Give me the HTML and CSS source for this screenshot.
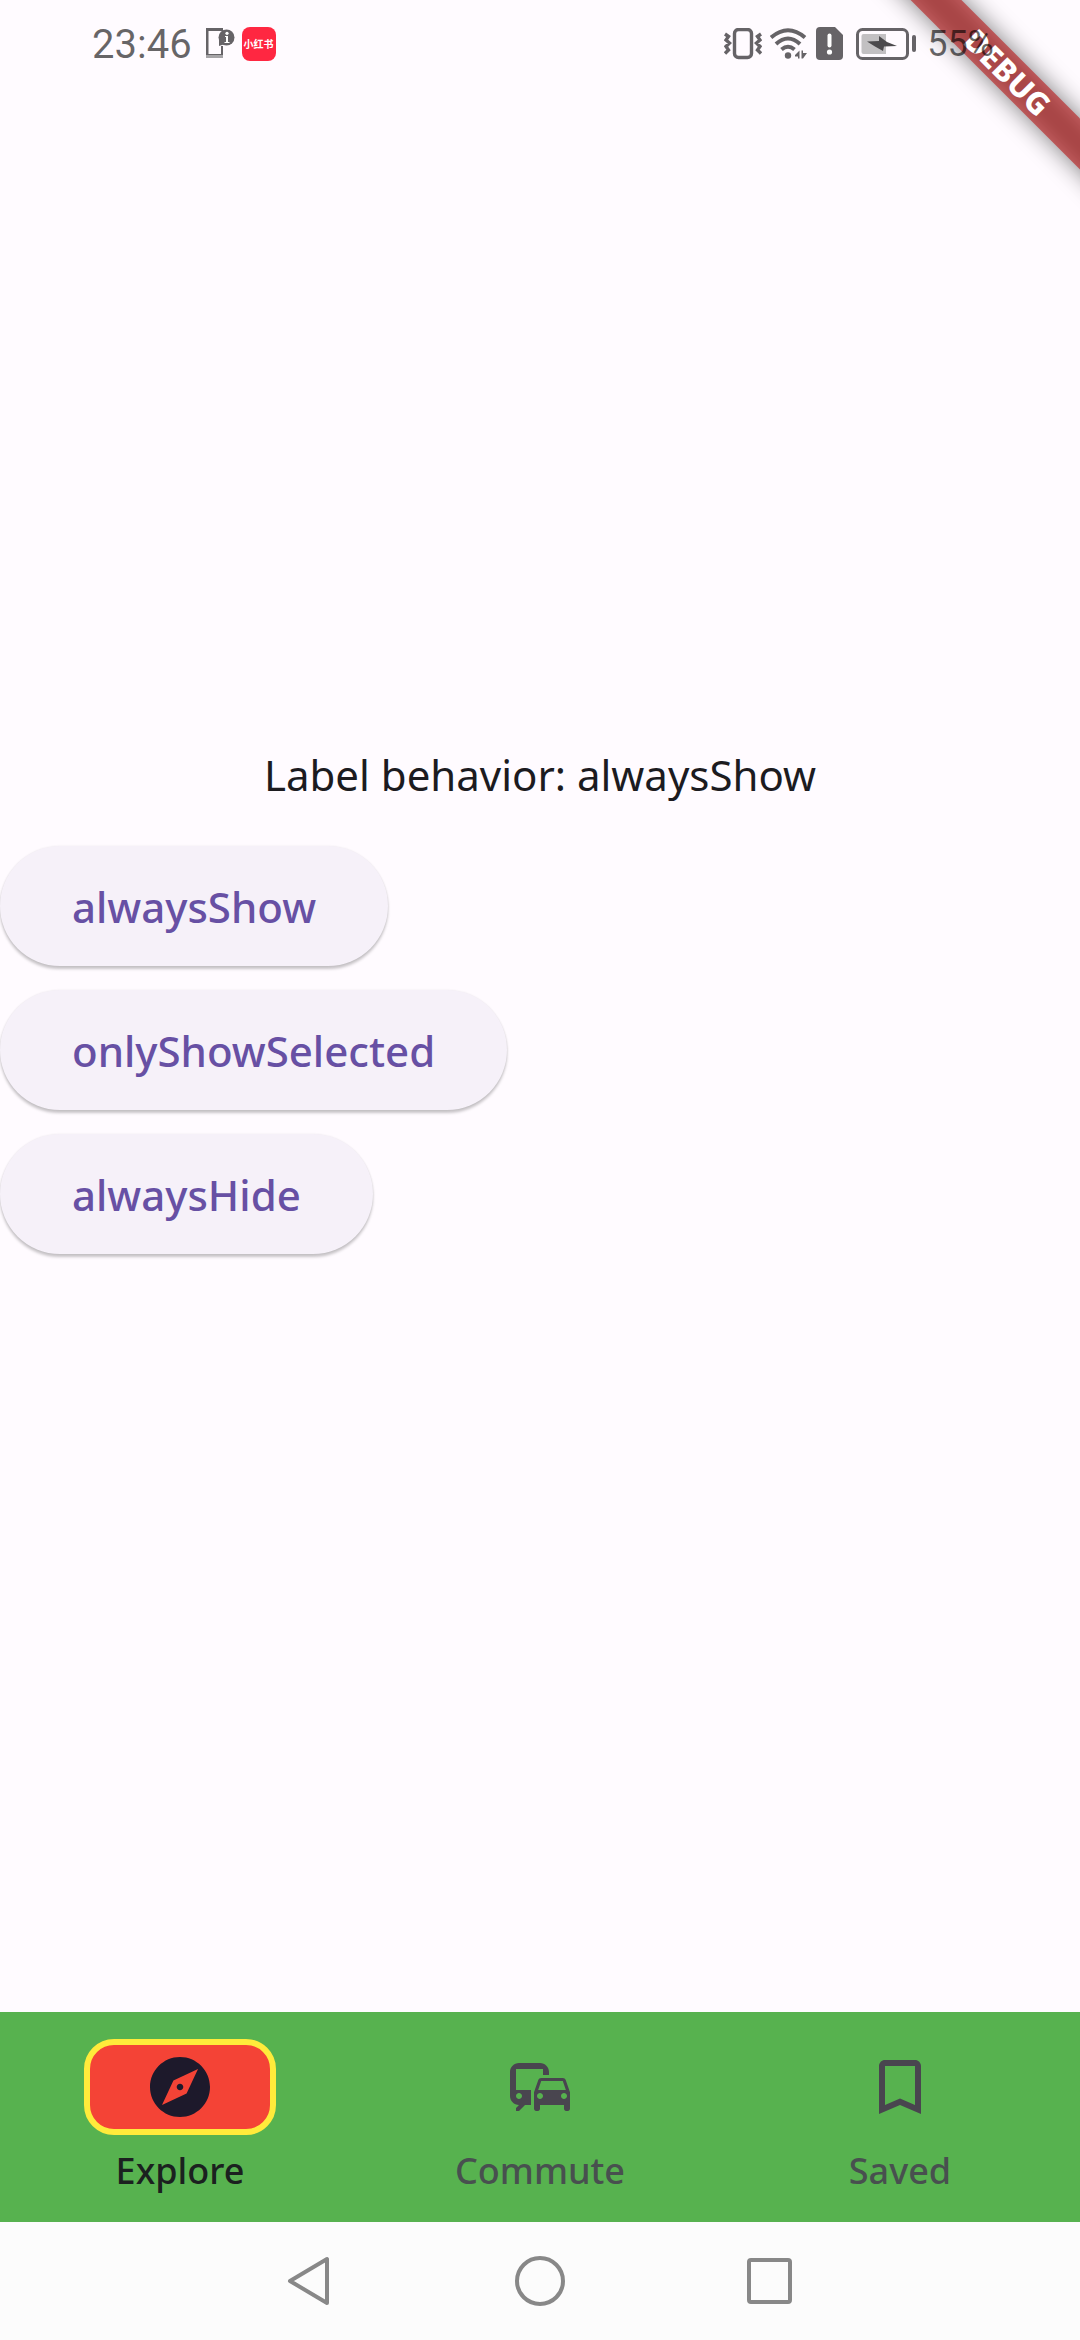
FILE: index.html
```
<!DOCTYPE html>
<html lang="en">
<head>
<meta charset="utf-8">
<meta name="viewport" content="width=device-width, initial-scale=1">
<title>Navigation bar</title>
<link rel="stylesheet" href="styles.css">
</head>
<body>
<div class="screen">
  <div class="debug-corner"><div class="debug-ribbon"><span class="debug-text">DEBUG</span></div></div>

  <header class="status">
    <div class="status-group">
      <time class="clock">23:46</time>
      <svg class="icon-device" width="30" height="32" viewBox="0 0 30 32" aria-hidden="true">
        <path d="M0 0H17V3H2.500V26H15V18H17V30H0Z" fill="#666367"/>
        <path d="M0 27H17V30H0Z" fill="#a6a4a7"/>
        <circle cx="20.500" cy="9.500" r="8" fill="#666367"/>
        <path d="M13 11V18L19 16Z" fill="#666367"/>
        <path d="M19 8H22V14H23.500V15H18.500V14H20V9H19Z" fill="#fff"/>
        <circle cx="21" cy="5.300" r="1.600" fill="#fff"/>
      </svg>
      <span class="app-badge">小红书</span>
    </div>
    <div class="status-group">
      <svg class="icon-vibrate" width="38" height="32" viewBox="0 0 38 32" fill="none" stroke="#666367" aria-hidden="true">
        <rect x="10.500" y="1.500" width="17" height="28" rx="4" stroke-width="3.400"/>
        <path d="M1 6L4.500 8.500L2 12L5.500 15L2 18.500L4.500 22L1 25.500M37 6L33.500 8.500L36 12L32.500 15L36 18.500L33.500 22L37 25.500" stroke-width="3.400"/>
      </svg>
      <svg class="icon-wifi" width="38" height="32" viewBox="0 0 38 32" fill="none" stroke="#666367" stroke-width="4" aria-hidden="true">
        <path d="M1 9.500Q18 -5 35 9.500"/>
        <path d="M6 16Q18 5 30 16"/>
        <path d="M11.500 21.500Q18 16 24.500 21.500"/>
        <circle cx="18" cy="27.500" r="3.200" fill="#666367" stroke="none"/>
        <path d="M25 27L29.500 22.500V30.500H28V28.500H25ZM31.500 22.500H33V25H37L33 30.500H31.500Z" fill="#666367" stroke="none"/>
      </svg>
      <svg class="icon-sim" width="27" height="34" viewBox="0 0 27 34" aria-hidden="true">
        <path d="M4 0H19L27 8V29Q27 33 23 33H4Q0 33 0 29V4Q0 0 4 0Z" fill="#666367"/>
        <rect x="11.500" y="6.500" width="4" height="14" rx="2" fill="#fff"/>
        <circle cx="13.500" cy="25" r="2.600" fill="#fff"/>
      </svg>
      <svg class="icon-battery" width="60" height="32" viewBox="0 0 60 32" aria-hidden="true">
        <rect x="1.500" y="1.500" width="50" height="29" rx="5" fill="none" stroke="#666367" stroke-width="3"/>
        <path d="M7.500 6H30V26H7.500Q5.500 26 5.500 24V8Q5.500 6 7.500 6Z" fill="#c2c0c2"/>
        <path d="M11 13.500L23 13V8L31 14L41 18L28 18.500L27 23L19 18.500Z" fill="#4c4a4d"/>
        <rect x="56" y="7" width="4" height="17" rx="2" fill="#666367"/>
      </svg>
      <span class="battery-level">55%</span>
    </div>
  </header>

  <main class="content">
    <p class="caption">Label behavior: alwaysShow</p>
    <div class="choices">
      <button class="choice" type="button">alwaysShow</button>
      <button class="choice" type="button">onlyShowSelected</button>
      <button class="choice" type="button">alwaysHide</button>
    </div>
  </main>

  <nav class="tabs">
    <button class="tab tab-selected" type="button" aria-current="page">
      <span class="indicator">
        <svg width="72" height="72" viewBox="0 0 24 24" fill="currentColor" aria-hidden="true"><path d="M12 10.900c-.610 0-1.100.490-1.100 1.100s.490 1.100 1.100 1.100c.610 0 1.100-.490 1.100-1.100s-.490-1.100-1.100-1.100zM12 2C6.480 2 2 6.480 2 12s4.480 10 10 10 10-4.480 10-10S17.520 2 12 2zm2.190 12.190L6 18l3.810-8.190L18 6l-3.810 8.190z"/></svg>
      </span>
      <span class="tab-label">Explore</span>
    </button>
    <button class="tab" type="button">
      <span class="indicator">
        <svg width="72" height="72" viewBox="0 0 24 24" fill="currentColor" aria-hidden="true"><path d="M12 4H5C3.340 4 2 5.340 2 7v8c0 1.660 1.340 3 3 3l-1 1v1h1l2-2.030L9 18v-5H4V5.980L13 6v2h2V7c0-1.660-1.340-3-3-3zM5 14c.550 0 1 .450 1 1s-.450 1-1 1-1-.450-1-1 .450-1 1-1zm15.570-4.340c-.140-.400-.520-.660-.970-.660h-7.190c-.460 0-.830.260-.980.660L10 13.770l.010 5.510c0 .380.310.720.690.720h.620c.380 0 .680-.380.680-.760V18h8v1.240c0 .380.310.760.690.760h.610c.380 0 .690-.340.690-.720l.010-1.370v-4.140l-1.430-4.110zm-8.160.340h7.190l1.030 3h-9.250l1.030-3zM12 16c-.550 0-1-.450-1-1s.450-1 1-1 1 .450 1 1-.450 1-1 1zm8 0c-.550 0-1-.450-1-1s.450-1 1-1 1 .450 1 1-.450 1-1 1z"/></svg>
      </span>
      <span class="tab-label">Commute</span>
    </button>
    <button class="tab" type="button">
      <span class="indicator">
        <svg width="72" height="72" viewBox="0 0 24 24" fill="currentColor" aria-hidden="true"><path d="M17 3H7c-1.100 0-2 .900-2 2v16l7-3 7 3V5c0-1.100-.900-2-2-2zm0 15l-5-2.180L7 18V5h10v13z"/></svg>
      </span>
      <span class="tab-label">Saved</span>
    </button>
  </nav>

  <footer class="system-bar">
    <button class="system-button" type="button" aria-label="Back">
      <svg width="52" height="52" viewBox="0 0 52 52" fill="none" stroke="#888" stroke-width="4" stroke-linejoin="round" aria-hidden="true"><path d="M43 4V48L6 26Z"/></svg>
    </button>
    <button class="system-button" type="button" aria-label="Home">
      <svg width="52" height="52" viewBox="0 0 52 52" fill="none" stroke="#888" stroke-width="4" aria-hidden="true"><circle cx="26" cy="26" r="23"/></svg>
    </button>
    <button class="system-button" type="button" aria-label="Recent apps">
      <svg width="52" height="52" viewBox="0 0 52 52" fill="none" stroke="#888" stroke-width="4" aria-hidden="true"><rect x="5" y="5" width="41" height="42" rx="2"/></svg>
    </button>
  </footer>
</div>
</body>
</html>
```
FILE: styles.css
```
* {
  box-sizing: border-box;
}

body {
  margin: 0;
  background: #fffbff;
  color: #1c1b1f;
  font-family: "Noto Sans", "Noto Sans CJK SC", sans-serif;
}

button {
  border: 0;
  padding: 0;
  background: none;
  font-family: inherit;
}

svg {
  display: block;
}

.screen {
  position: relative;
  display: flex;
  flex-direction: column;
  min-height: 100vh;
}

/* Debug ribbon across the top right corner */
.debug-corner {
  position: absolute;
  top: 0;
  right: 0;
  width: 280px;
  height: 280px;
  overflow: hidden;
}

.debug-ribbon {
  position: absolute;
  top: 54px;
  right: -88px;
  width: 320px;
  height: 36px;
  transform: rotate(45deg);
}

.debug-ribbon::before {
  content: "";
  position: absolute;
  inset: 0;
  background: rgba(0, 0, 0, 0.5);
  filter: blur(12px);
}

.debug-text {
  position: absolute;
  inset: 0;
  background: rgba(183, 28, 28, 0.63);
  color: #fff;
  font-size: 31px;
  font-weight: 800;
  line-height: 36px;
  text-align: center;
}

/* Status bar */
.status {
  position: relative;
  display: flex;
  justify-content: space-between;
  align-items: center;
  height: 88px;
  padding: 0 86px 0 92px;
  color: rgba(0, 0, 0, 0.6);
  font-family: Roboto, sans-serif;
}

.status-group {
  display: flex;
  align-items: center;
}

.clock {
  margin-right: 14px;
  font-size: 40px;
}

.icon-device {
  margin-right: 6px;
}

.app-badge {
  width: 34px;
  height: 34px;
  border-radius: 8px;
  background: #ff2741;
  color: #fff;
  font-family: "Noto Sans CJK SC", sans-serif;
  font-size: 10px;
  font-weight: 700;
  line-height: 34px;
  text-align: center;
}

.icon-vibrate,
.icon-wifi {
  margin-right: 8px;
}

.icon-sim {
  margin-right: 13px;
}

.icon-battery {
  margin-right: 11px;
}

.battery-level {
  font-size: 36px;
}

/* Page content */
.content {
  flex: 1;
  display: flex;
  flex-direction: column;
  justify-content: center;
  padding-bottom: 88px;
}

.caption {
  margin: 0 0 42px;
  font-size: 42px;
  line-height: 58px;
  text-align: center;
}

.choices {
  display: flex;
  flex-direction: column;
  align-items: flex-start;
  gap: 24px;
  padding-bottom: 12px;
}

.choice {
  height: 120px;
  padding: 0 72px;
  border-radius: 60px;
  background: #f6f1f9;
  box-shadow: 0 3px 3px rgba(0, 0, 0, 0.22), 0 0 2px rgba(0, 0, 0, 0.08);
  color: #6750a4;
  font-size: 42px;
  font-weight: 500;
}

/* Navigation tabs */
.tabs {
  display: flex;
  height: 210px;
  padding-top: 27px;
  background: #57b24f;
}

.tab {
  flex: 1;
  display: flex;
  flex-direction: column;
  align-items: center;
  gap: 12px;
  color: #49454f;
}

.indicator {
  display: flex;
  align-items: center;
  justify-content: center;
  width: 192px;
  height: 96px;
  border: 6px solid transparent;
  border-radius: 30px;
}

.tab-selected .indicator {
  border-color: #ffeb3b;
  background: #f44336;
  color: #1d192b;
}

.tab-label {
  color: #48504f;
  font-size: 36px;
  font-weight: 500;
  line-height: 48px;
}

.tab-selected .tab-label {
  color: #1b211f;
}

/* System navigation */
.system-bar {
  display: flex;
  justify-content: center;
  height: 118px;
  background: #fcfcfc;
}

.system-button {
  display: flex;
  align-items: center;
  justify-content: center;
  width: 230px;
}
```
